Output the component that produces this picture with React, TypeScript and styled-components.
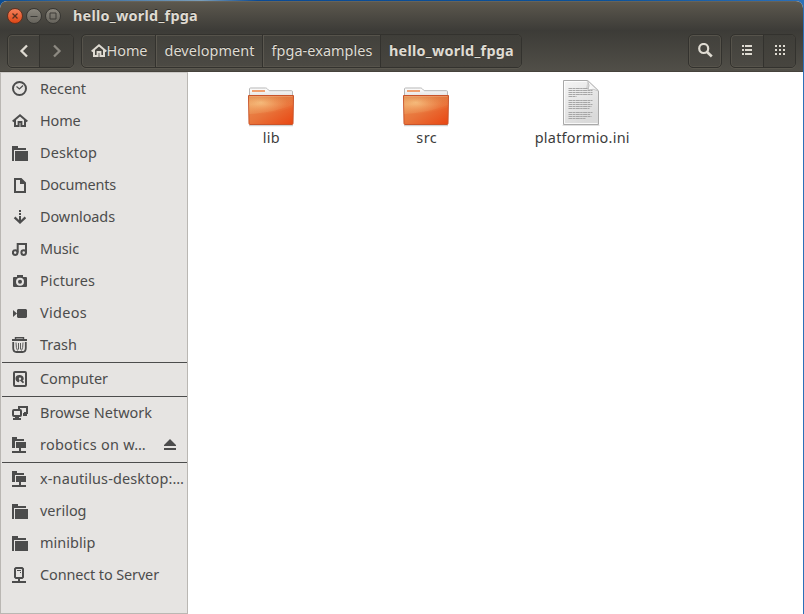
import React, { useLayoutEffect, useRef, useState } from 'react';
import styled, { createGlobalStyle, css } from 'styled-components';

const GlobalStyle = createGlobalStyle`
  * { box-sizing: border-box; }
  body { margin: 0; overflow: hidden; background: #fff; }
`;

const Desktop = styled.div`
  width: 804px;
  height: 614px;
  padding: 1px 1px 0 0;
  background: linear-gradient(90deg, #0a4c92, #7a9db8 25%, #0a4a94 32%, #0b5198 75%, #2c70b8);
  font-family: 'Noto Sans', 'Open Sans', sans-serif;
  font-size: 14.45px;
  line-height: 20px;
`;

const Window = styled.div`
  display: flex;
  flex-direction: column;
  height: 613px;
  border-radius: 7px 7px 0 0;
  overflow: hidden;
  background: #fff;
`;

const TitleBar = styled.header`
  display: flex;
  align-items: center;
  flex: 0 0 29px;
  padding-left: 7px;
  color: #dfdbd2;
  font-weight: 700;
  text-shadow: 0 -1px 0 #2a2925;
  background: linear-gradient(#5c584e, #3d3c38);
  border-top: 1px solid #66635a;
`;

const WindowControls = styled.div`
  display: flex;
  gap: 3px;
  margin-right: 12px;
`;

const ControlButton = styled.button<{ $close?: boolean }>`
  display: flex;
  align-items: center;
  justify-content: center;
  width: 16px;
  height: 16px;
  padding: 0;
  border: 1px solid ${p => (p.$close ? '#64311f' : '#383733')};
  border-radius: 50%;
  background: ${p => (p.$close ? 'linear-gradient(#f4805a, #de4716)' : 'linear-gradient(#8a867d, #66635c)')};
  color: #3c3b37;
`;

const Toolbar = styled.nav`
  display: flex;
  align-items: flex-start;
  flex: 0 0 42px;
  padding: 4px 7px 0;
  background: linear-gradient(#3c3b37, #514f48);
  border-bottom: 1px solid #46433c;
`;

const ButtonGroup = styled.div<{ $gap?: number }>`
  display: flex;
  height: 34px;
  margin-left: ${p => p.$gap ?? 0}px;
  border: 1px solid #33322e;
  border-radius: 5px;
  box-shadow: 0 1px 0 #5b584f, inset 0 0 0 1px #56534b;
  background: linear-gradient(#42413c, #4c4a44);
`;

const ToolButton = styled.button<{ $width: number; $pressed?: boolean; $divided?: boolean }>`
  display: flex;
  align-items: center;
  justify-content: center;
  flex: 0 0 auto;
  width: ${p => p.$width}px;
  padding: 0;
  border: 0;
  border-left: ${p => (p.$divided ? '1px solid #33322e' : '0')};
  background: transparent;
  color: #dfdbd2;
  font: inherit;
  ${p => p.$pressed && css`
    background: linear-gradient(#3f3e39, #47453f);
    border-radius: 0 4px 4px 0;
  `}
`;

const PathButton = styled(ToolButton)<{ $current?: boolean }>`
  padding-left: 1px;
  font-weight: ${p => (p.$current ? 700 : 400)};
  text-shadow: 0 -1px 0 #302f2b;
  box-shadow: ${p => (p.$divided && !p.$current ? 'inset 1px 0 0 #5b5850' : 'none')};
`;

const Spacer = styled.div`
  flex: 1;
`;

const Body = styled.div`
  display: flex;
  flex: 1;
  min-height: 0;
`;

const Sidebar = styled.aside`
  flex: 0 0 188px;
  border: 1px solid #bab7b3;
  border-top-color: #cbc9c6;
  background: #e6e4e2;
  color: #4c4c4c;
`;

const Place = styled.div`
  display: flex;
  align-items: center;
  height: 32px;
  padding: 0 0 0 11px;
  white-space: nowrap;
`;

const PlaceName = styled.div`
  flex: 1;
  margin-left: 12px;
`;

const Eject = styled.div`
  display: flex;
  margin-right: 10px;
`;

const Separator = styled.hr`
  height: 2px;
  margin: 0 0 0 1px;
  border: 0;
  border-bottom: 1px solid #4c4c4c;
`;

const Files = styled.main`
  display: flex;
  align-items: flex-start;
  flex: 1;
  padding: 7px 0 0 5px;
  background: #fff;
  color: #3c3c3c;
`;

const FileItem = styled.div`
  display: flex;
  flex-direction: column;
  align-items: center;
  gap: 1px;
  flex: 0 0 155.5px;
  height: 72px;
`;

const FileName = styled.div`
  padding-left: 1px;
`;

const Glyph = styled.svg`
  display: block;
  flex: none;
`;

const LabelText = styled.span`
  display: inline-block;
  white-space: pre;
`;

/* Spreads the letters of a label so that it fills the given advance width. */
function Label({ text, width }: { text: string; width: number }) {
  const ref = useRef<HTMLSpanElement>(null);
  const [spacing, setSpacing] = useState(0);
  useLayoutEffect(() => {
    const natural = ref.current!.getBoundingClientRect().width;
    setSpacing((width - natural) / text.length);
  }, [text, width]);
  return <LabelText ref={ref} style={{ letterSpacing: spacing }}>{text}</LabelText>;
}

const shapes: Record<string, React.ReactNode> = {
  recent: (
    <g fill="none" stroke="currentColor">
      <circle cx="7.5" cy="7.5" r="6.5" strokeWidth="2" />
      <path d="M4.5 5.5 7.4 8 11 4.5" strokeWidth="1.2" />
    </g>
  ),
  home: (
    <g fill="none" stroke="currentColor" strokeWidth="2">
      <path d="M0.7 8.4 8 2.2 15.3 8.4" />
      <path d="M3 7v6h3.6V9h2.8v4H13V7" />
    </g>
  ),
  folder: <path d="M0 1h6v2h8v2H2v11H0zM3 6h13v10H3z" fill="currentColor" />,
  document: <path d="M3 2h6l4 4v9H3z M9 2v4h4" fill="none" stroke="currentColor" strokeWidth="2" />,
  download: (
    <>
      <path d="M7 1h2v2H7zM7 4h2v2H7zM7 7h2v5H7z" fill="currentColor" />
      <path d="M2.6 8.4 8 13.5 13.4 8.4" fill="none" stroke="currentColor" strokeWidth="2.3" />
    </>
  ),
  music: (
    <g fill="none" stroke="currentColor" strokeWidth="2">
      <circle cx="3.2" cy="11.6" r="2.3" />
      <circle cx="11.7" cy="11.6" r="2.3" />
      <path d="M5.7 11.5V3H14v9" />
    </g>
  ),
  camera: (
    <path
      fill="currentColor"
      fillRule="evenodd"
      d="M5 2h6v2h3q1 0 1 1v8q0 1-1 1H2q-1 0-1-1V5q0-1 1-1h3zM8 4.8a4 4 0 1 0 0 8 4 4 0 0 0 0-8zM8 6.8a2 2 0 1 1 0 4 2 2 0 0 1 0-4z"
    />
  ),
  video: <path d="M6 4h8l1 1v7l-1 1H6l-1-1V5zM1 5l4 3.5L1 12z" fill="currentColor" />,
  trash: (
    <g fill="none" stroke="currentColor">
      <path d="M3.5 2V.8h8V2" strokeWidth="1.4" />
      <path d="M0 3h15" strokeWidth="2" />
      <path d="M1.2 5v6q0 4 3.3 4h6q3.3 0 3.3-4V5" strokeWidth="1.8" />
      <path d="M4 5.5q0 6 1.5 8M11 5.5q0 6-1.5 8M6.5 6v6.5M8.5 6v6.5" strokeWidth="0.9" />
    </g>
  ),
  computer: (
    <>
      <rect x="2" y="1" width="12" height="14" rx="1" fill="none" stroke="currentColor" strokeWidth="2" />
      <path fill="currentColor" fillRule="evenodd" d="M8 4a3.7 3.7 0 1 0-1 7.3L7.500 9l3.300 3.300 1.300-1-1.600-2.300h1A3.700 3.700 0 0 0 8 4zM8 6.500a1.200 1.200 0 1 1 0 2.400 1.200 1.200 0 0 1 0-2.400z" />
    </>
  ),
  network: (
    <>
      <path d="M7 4V2h8v6h-3" fill="none" stroke="currentColor" strokeWidth="2" />
      <path d="M11 8h2v1h2v2h-4z" fill="currentColor" />
      <rect x="1" y="5" width="8" height="6" rx="1" fill="none" stroke="currentColor" strokeWidth="2" />
      <path d="M3 12h4v1h2v2H1v-2h2z" fill="currentColor" />
    </>
  ),
  remote: <path d="M0 0h5v2h7v2H3v7H0zM4 5h10v6H9v3h5v2H0v-2h7v-3H4z" fill="currentColor" />,
  server: (
    <>
      <path d="M4 1h6l1 1v8l-1 1H4l-1-1V2z" fill="none" stroke="currentColor" strokeWidth="2" />
      <path d="M5 3h4v1H5zM8 5h1v1H8zM6 12h2v2h6v2H0v-2h6z" fill="currentColor" />
    </>
  ),
};

function Icon({ name }: { name: string }) {
  return <Glyph width="16" height="16" viewBox="0 0 16 16">{shapes[name]}</Glyph>;
}

function FolderIcon() {
  return (
    <Glyph width="48" height="48" viewBox="0 0 48 48">
      <defs>
        <linearGradient id="folderFront" x1="0" y1="0" x2="1" y2="1">
          <stop offset="0" stopColor="#eda765" />
          <stop offset="0.5" stopColor="#e97d43" />
          <stop offset="1" stopColor="#ea4310" />
        </linearGradient>
        <linearGradient id="folderShade" x1="0" y1="0" x2="0" y2="1">
          <stop offset="0" stopColor="#c45a28" stopOpacity="0.3" />
          <stop offset="0.3" stopColor="#d9581d" stopOpacity="0" />
        </linearGradient>
        <radialGradient id="folderGlow" cx="0.27" cy="0.35" r="0.6">
          <stop offset="0" stopColor="#ffe0a0" stopOpacity="0.6" />
          <stop offset="1" stopColor="#f6a968" stopOpacity="0.1" />
        </radialGradient>
        <linearGradient id="folderBack" x1="0" y1="0" x2="0" y2="1">
          <stop offset="0" stopColor="#fff" />
          <stop offset="1" stopColor="#d9d9d9" />
        </linearGradient>
      </defs>
      <path d="M2 46.6h44" stroke="#000" strokeOpacity="0.18" strokeWidth="1.2" />
      <path d="M2.5 20V10q0-1 1-1h15q1 0 1.7.7l2 2h22.300q1 0 1 1V20z" fill="url(#folderBack)" stroke="#b6b6b6" />
      <rect x="5" y="11" width="13" height="2" fill="#f0a070" />
      <path d="M1.5 16.5h45l-.5 28q0 1-1 1H3q-1 0-1-1z" fill="url(#folderFront)" stroke="#c8542a" />
      <path d="M2 17h44v11Q24 36 2 35z" fill="url(#folderGlow)" />
      <path d="M2 17h44v28H2z" fill="url(#folderShade)" />
      <path d="M2 35Q26 34 46 26v19H2z" fill="#e8501a" fillOpacity="0.2" />
      <path d="M2.5 17.5h43" stroke="#f5b58c" strokeOpacity="0.4" />
    </Glyph>
  );
}

function TextFileIcon() {
  const lines = [[9, 20], [11, 24], [13, 24], [15, 24], [17, 8], [21, 24], [23, 22], [25, 24], [27, 23], [29, 21], [33, 24], [35, 22], [37, 23], [39, 17]];
  return (
    <Glyph width="48" height="48" viewBox="1 0 48 48">
      <defs>
        <linearGradient id="sheet" x1="0" y1="0" x2="0.5" y2="1">
          <stop offset="0" stopColor="#f5f5f5" />
          <stop offset="1" stopColor="#dadada" />
        </linearGradient>
        <linearGradient id="curl" x1="0" y1="1" x2="1" y2="0">
          <stop offset="0" stopColor="#fff" />
          <stop offset="0.5" stopColor="#f5f5f5" />
          <stop offset="1" stopColor="#aaa" />
        </linearGradient>
      </defs>
      <path d="M5.5 46.3h37" stroke="#000" strokeOpacity="0.15" />
      <path d="M6.5 1.5h24l11 10.500v33.500h-35z" fill="url(#sheet)" stroke="#a9a9a9" />
      <path d="M7.5 2.5h22M7.5 2.5v42h33" fill="none" stroke="#fff" strokeOpacity="0.8" />
      {lines.map(([y, w]) => <path key={y} d={`M11.500 ${y + .5}h${w}`} stroke="#a6a6a6" strokeDasharray="4 .4 2.5 .4" />)}
      <path d="M29 9l2-8 11 10.5q-5-2-11 .5 1-2-2-3z" fill="#777" fillOpacity="0.2" />
      <path d="M30.5 1.5q3 5 .5 9.5 5-2 10.5 1z" fill="url(#curl)" stroke="#b8b8b8" strokeWidth="0.7" />
    </Glyph>
  );
}

type PlaceInfo = { icon: string; name: string; width: number; eject?: boolean };

const sections: PlaceInfo[][] = [
  [
    { icon: 'recent', name: 'Recent', width: 46 },
    { icon: 'home', name: 'Home', width: 40.5 },
    { icon: 'folder', name: 'Desktop', width: 57 },
    { icon: 'document', name: 'Documents', width: 76 },
    { icon: 'download', name: 'Downloads', width: 75 },
    { icon: 'music', name: 'Music', width: 39 },
    { icon: 'camera', name: 'Pictures', width: 55 },
    { icon: 'video', name: 'Videos', width: 47 },
    { icon: 'trash', name: 'Trash', width: 37 },
  ],
  [{ icon: 'computer', name: 'Computer', width: 68 }],
  [
    { icon: 'network', name: 'Browse Network', width: 112 },
    { icon: 'remote', name: 'robotics on w…', width: 106, eject: true },
  ],
  [
    { icon: 'remote', name: 'x-nautilus-desktop:…', width: 144 },
    { icon: 'folder', name: 'verilog', width: 46.5 },
    { icon: 'folder', name: 'miniblip', width: 55.5 },
    { icon: 'server', name: 'Connect to Server', width: 119 },
  ],
];

export default function App() {
  return (
    <>
      <GlobalStyle />
      <Desktop>
        <Window>
          <TitleBar>
            <WindowControls>
              <ControlButton $close aria-label="Close">
                <Glyph width="8" height="8" viewBox="0 0 8 8"><path d="M1.5 1.5 6.5 6.5M6.5 1.5 1.5 6.5" stroke="#57301f" strokeWidth="1.3" /></Glyph>
              </ControlButton>
              <ControlButton aria-label="Minimize">
                <Glyph width="8" height="8" viewBox="0 0 8 8"><path d="M.5 4.5h7" stroke="currentColor" /></Glyph>
              </ControlButton>
              <ControlButton aria-label="Maximize">
                <Glyph width="8" height="8" viewBox="0 0 8 8"><path d="M1 1h6v6H1z" fill="none" stroke="currentColor" /></Glyph>
              </ControlButton>
            </WindowControls>
            <Label text="hello_world_fpga" width={125} />
          </TitleBar>
          <Toolbar>
            <ButtonGroup>
              <ToolButton $width={31} aria-label="Back">
                <Glyph width="16" height="16" viewBox="0 0 16 16"><path d="M11 2.5 5.5 8l5.5 5.5" fill="none" stroke="currentColor" strokeWidth="2.3" /></Glyph>
              </ToolButton>
              <ToolButton $width={34} $divided $pressed aria-label="Forward">
                <Glyph width="16" height="16" viewBox="0 0 16 16"><path d="M5 2.5 10.5 8 5 13.5" fill="none" stroke="#8d8a82" strokeWidth="2.3" /></Glyph>
              </ToolButton>
            </ButtonGroup>
            <ButtonGroup $gap={7}>
              <PathButton $width={73}>
                <Icon name="home" /><Label text="Home" width={41} />
              </PathButton>
              <PathButton $width={107} $divided><Label text="development" width={90} /></PathButton>
              <PathButton $width={118} $divided><Label text="fpga-examples" width={101} /></PathButton>
              <PathButton $width={141} $divided $pressed $current><Label text="hello_world_fpga" width={125} /></PathButton>
            </ButtonGroup>
            <Spacer />
            <ButtonGroup>
              <ToolButton $width={32} aria-label="Search">
                <Glyph width="16" height="16" viewBox="0 0 16 16"><circle cx="6.7" cy="5.5" r="4.5" fill="none" stroke="currentColor" strokeWidth="2.2" /><path d="M9.8 8.7 14.8 13.5" stroke="currentColor" strokeWidth="2.6" /></Glyph>
              </ToolButton>
            </ButtonGroup>
            <ButtonGroup $gap={8}>
              <ToolButton $width={32} aria-label="List view">
                <Glyph width="16" height="16" viewBox="0 0 16 16"><path d="M3 2h2v2H3zM6 2h7v2H6zM3 6h2v2H3zM6 6h7v2H6zM3 10h2v2H3zM6 10h7v2H6z" fill="currentColor" /></Glyph>
              </ToolButton>
              <ToolButton $width={32} $divided $pressed aria-label="Icon view">
                <Glyph width="16" height="16" viewBox="0 0 16 16"><path d="M3 3h10M3 7h10M3 11h10" stroke="currentColor" strokeWidth="2" strokeDasharray="2 2" /></Glyph>
              </ToolButton>
            </ButtonGroup>
          </Toolbar>
          <Body>
            <Sidebar>
              {sections.map((places, index) => (
                <React.Fragment key={index}>
                  {index > 0 && <Separator />}
                  {places.map(place => (
                    <Place key={place.name}>
                      <Icon name={place.icon} />
                      <PlaceName><Label text={place.name} width={place.width} /></PlaceName>
                      {place.eject && (
                        <Eject>
                          <Glyph width="14" height="16" viewBox="0 0 14 16"><path d="M7 2 13 8v1H1V8zM1 11h12v2H1z" fill="currentColor" /></Glyph>
                        </Eject>
                      )}
                    </Place>
                  ))}
                </React.Fragment>
              ))}
            </Sidebar>
            <Files>
              <FileItem><FolderIcon /><FileName><Label text="lib" width={17} /></FileName></FileItem>
              <FileItem><FolderIcon /><FileName><Label text="src" width={21} /></FileName></FileItem>
              <FileItem><TextFileIcon /><FileName><Label text="platformio.ini" width={95} /></FileName></FileItem>
            </Files>
          </Body>
        </Window>
      </Desktop>
    </>
  );
}
